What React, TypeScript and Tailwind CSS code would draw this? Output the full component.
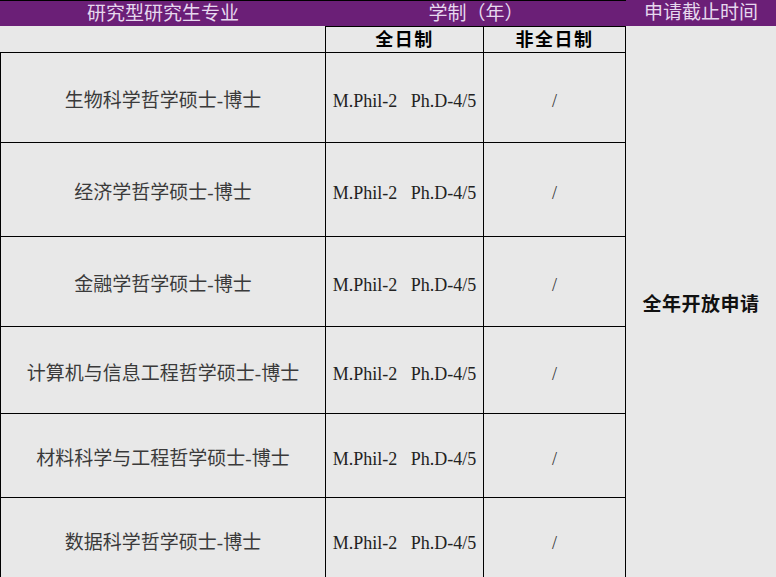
const programs = [
  { name: "生物科学哲学硕士-博士", h: "h-[90px]" },
  { name: "经济学哲学硕士-博士", h: "h-[94px]" },
  { name: "金融学哲学硕士-博士", h: "h-[90px]" },
  { name: "计算机与信息工程哲学硕士-博士", h: "h-[87px]" },
  { name: "材料科学与工程哲学硕士-博士", h: "h-[84px]" },
  { name: "数据科学哲学硕士-博士", h: "h-[83px]" },
];

const font = "font-['Liberation_Serif','Noto_Sans_CJK_SC',serif]";

export default function App() {
  return (
    <div className={`h-[577px] w-[776px] overflow-hidden bg-[#e8e8e8] ${font}`}>
      {/* header band */}
      <div className="flex h-[26px] bg-[#6b1f77] text-[19px] leading-[26px] text-[#e6d8ee]">
        <div className="flex w-[626px] border-t border-black">
          <div className="w-[326px] text-center">研究型研究生专业</div>
          <div className="w-[300px] text-center">学制（年）</div>
        </div>
        <div className="w-[150px] text-center">申请截止时间</div>
      </div>

      <div className="flex">
        <div className="w-[626px]">
          {/* sub header */}
          <div className="flex h-[27px] text-[18px] font-bold tracking-[1.5px] text-black">
            <div className="w-[326px] border-r border-b border-black" />
            <div className="flex w-[158px] items-center justify-center border-t border-r border-b border-black pt-[2px]">
              全日制
            </div>
            <div className="flex w-[142px] items-center justify-center border-t border-r border-b border-black pt-[2px]">
              非全日制
            </div>
          </div>

          {programs.map((p) => (
            <div key={p.name} className={`flex ${p.h} text-[18px] text-[#333]`}>
              <div className="flex w-[326px] items-center justify-center border-l border-r border-b border-black pt-[8px] text-[19px] text-[#3a3a3a]">
                {p.name}
              </div>
              <div className="flex w-[158px] items-center justify-center whitespace-pre border-r border-b border-black pt-[8px] text-[#222]">
                {"M.Phil-2   Ph.D-4/5"}
              </div>
              <div className="flex w-[142px] items-center justify-center border-r border-b border-black pt-[8px]">
                /
              </div>
            </div>
          ))}
        </div>

        <div className="flex h-[554px] w-[150px] items-center justify-center pt-[4px] text-[19px] font-bold tracking-[0.5px] text-[#111]">
          全年开放申请
        </div>
      </div>
    </div>
  );
}
